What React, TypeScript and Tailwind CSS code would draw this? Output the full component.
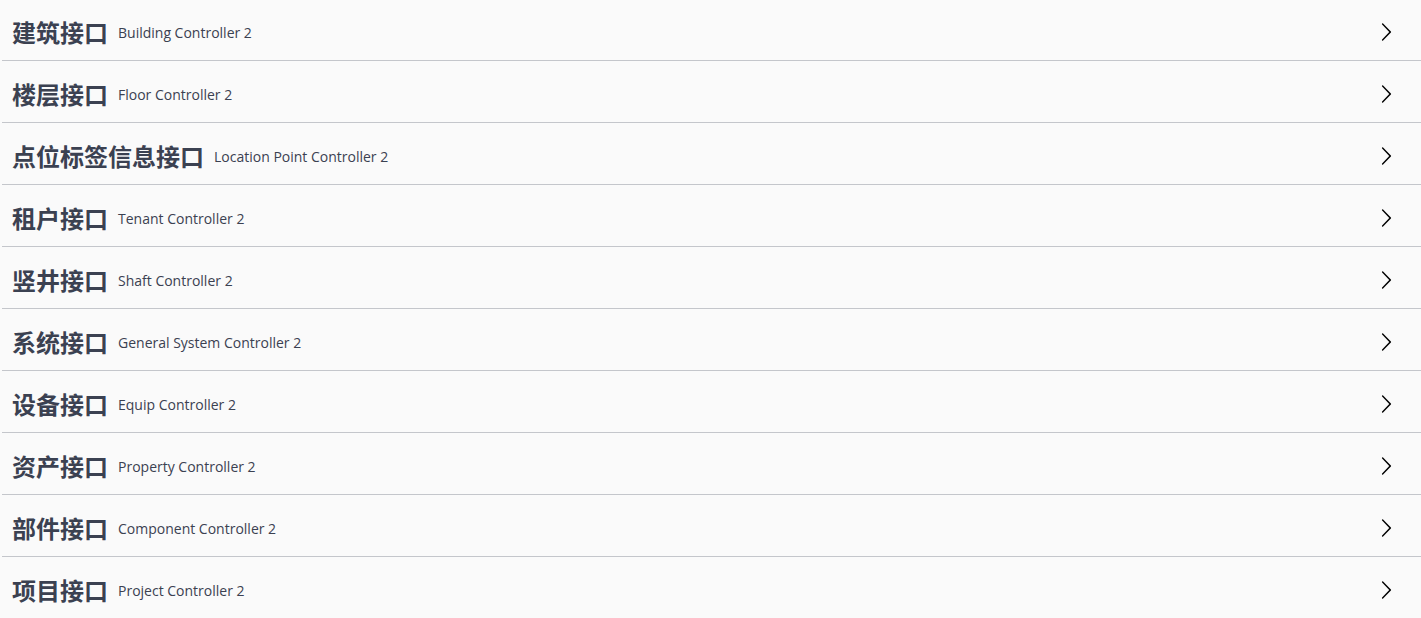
import React from "react";

const rows: [string, string][] = [
  ["建筑接口", "Building Controller 2"],
  ["楼层接口", "Floor Controller 2"],
  ["点位标签信息接口", "Location Point Controller 2"],
  ["租户接口", "Tenant Controller 2"],
  ["竖井接口", "Shaft Controller 2"],
  ["系统接口", "General System Controller 2"],
  ["设备接口", "Equip Controller 2"],
  ["资产接口", "Property Controller 2"],
  ["部件接口", "Component Controller 2"],
  ["项目接口", "Project Controller 2"],
];

function Arrow() {
  return (
    <svg width="20" height="20" viewBox="0 0 20 20" className="shrink-0" fill="#000">
      <path d="M13.25 10L6.109 2.58a.697.697 0 0 1 0-.979.68.68 0 0 1 .969 0l7.83 7.908a.697.697 0 0 1 0 .979l-7.83 7.909a.68.68 0 0 1-.969 0 .697.697 0 0 1 0-.98L13.25 10z" />
    </svg>
  );
}

export default function App() {
  return (
    <div className="w-[1421px] h-[618px] overflow-hidden bg-[#fafafa] pt-[4px] pl-[2px]">
      {rows.map(([zh, en]) => (
        <div
          key={en}
          className="flex items-center h-[57px] mb-[5px] border-b border-[#c4c6cb] pl-[10px] pr-[25px] cursor-pointer"
        >
          <div className="flex flex-1 items-center">
            <span
              className="text-[24px] font-bold text-[#3b4151] leading-[36px]"
              style={{ fontFamily: '"Noto Sans CJK SC", "Open Sans", sans-serif' }}
            >
              {zh}
            </span>
            <span
              className="text-[14px] text-[#3b4151] px-[10px]"
              style={{ fontFamily: '"Open Sans", sans-serif' }}
            >
              {en}
            </span>
          </div>
          <Arrow />
        </div>
      ))}
    </div>
  );
}
